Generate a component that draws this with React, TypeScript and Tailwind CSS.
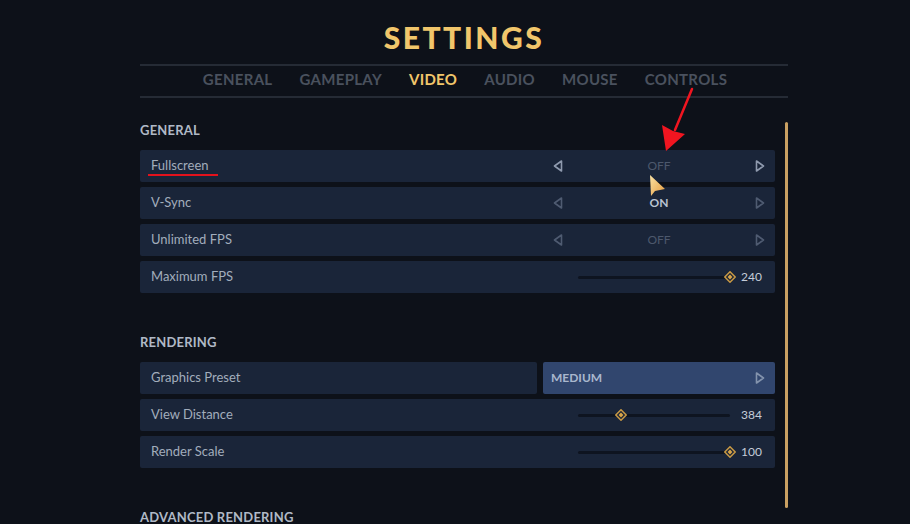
import React from "react";

const FONT = { fontFamily: "Lato, 'Noto Sans', sans-serif" };

function Arrow({ dir, color }: { dir: "left" | "right"; color: string }) {
  return (
    <svg width="10" height="12" viewBox="0 0 10 12">
      {dir === "left" ? (
        <polygon points="8.5,1 1.5,6 8.5,11" fill="none" stroke={color} strokeWidth="1.6" strokeLinejoin="round" />
      ) : (
        <polygon points="1.5,1 8.5,6 1.5,11" fill="none" stroke={color} strokeWidth="1.6" strokeLinejoin="round" />
      )}
    </svg>
  );
}

function Thumb() {
  return (
    <svg width="12" height="12" viewBox="0 0 12 12">
      <polygon points="6,0.8 11.2,6 6,11.2 0.8,6" fill="#1a2335" stroke="#c99a45" strokeWidth="1.5" />
      <polygon points="6,3.6 8.4,6 6,8.4 3.6,6" fill="#d9a649" />
    </svg>
  );
}

function Row({ label, children }: { label: string; children: React.ReactNode }) {
  return (
    <div className="flex h-[32px] items-center justify-between rounded-[2px] bg-[#1a2539]">
      <span className="pl-[11px] text-[13px] text-[#a2adbc]">{label}</span>
      {children}
    </div>
  );
}

function Selector({ value, active, on }: { value: string; active?: boolean; on?: boolean }) {
  const c = active ? "#8f9aae" : "#4f5b71";
  return (
    <div className="flex w-[232px] items-center justify-between px-[10px]">
      <Arrow dir="left" color={c} />
      <span className={on ? "text-[12px] font-bold text-[#b9c3d2]" : "text-[12px] text-[#4d586c]"}>{value}</span>
      <Arrow dir="right" color={c} />
    </div>
  );
}

function Slider({ pct, value }: { pct: number; value: string }) {
  return (
    <div className="flex w-[232px] items-center pl-[35px] pr-[10px]">
      <div className="relative h-[3px] w-[152px] rounded-full bg-[#0e1420]">
        <div className="absolute top-1/2 -translate-x-1/2 -translate-y-1/2" style={{ left: `${pct}%` }}>
          <Thumb />
        </div>
      </div>
      <span className="ml-[11px] w-[24px] text-[12px] text-[#c4ccd8]">{value}</span>
    </div>
  );
}

export default function App() {
  const tabs = ["GENERAL", "GAMEPLAY", "VIDEO", "AUDIO", "MOUSE", "CONTROLS"];
  return (
    <div className="relative h-[524px] w-[910px] overflow-hidden bg-[#0d1119]" style={FONT}>
      <div className="ml-[140px] w-[648px]">
        <div className="pt-[22px] text-center text-[30px] font-black leading-[30px] tracking-[2.5px] text-[#f1c66b]">
          SETTINGS
        </div>
        <div className="mt-[12px] h-[2px] bg-[#252b35]" />
        <div className="flex h-[30px] items-center justify-center gap-[27px] pb-[4px] pl-[2px] text-[15px] font-bold tracking-[0.3px] text-[#4a515e]">
          {tabs.map((t) => (
            <span key={t} className={t === "VIDEO" ? "text-[#f1c66b]" : ""}>
              {t}
            </span>
          ))}
        </div>
        <div className="h-[2px] bg-[#252b35]" />

        <div className="mt-[24px] flex gap-[10px]">
          <div className="w-[635px]">
            <div className="text-[13px] font-bold leading-[16px] tracking-[0.2px] text-[#b0b9c6]">GENERAL</div>
            <div className="mt-[12px] flex flex-col gap-[5px]">
              <Row label="Fullscreen">
                <Selector value="OFF" active />
              </Row>
              <Row label="V-Sync">
                <Selector value="ON" on />
              </Row>
              <Row label="Unlimited FPS">
                <Selector value="OFF" />
              </Row>
              <Row label="Maximum FPS">
                <Slider pct={100} value="240" />
              </Row>
            </div>

            <div className="mt-[41px] text-[13px] font-bold leading-[16px] tracking-[0.2px] text-[#b0b9c6]">RENDERING</div>
            <div className="mt-[12px] flex flex-col gap-[5px]">
              <div className="flex h-[32px] gap-[6px]">
                <div className="flex flex-1 items-center rounded-[2px] bg-[#1a2539] pl-[11px] text-[13px] text-[#a2adbc]">
                  Graphics Preset
                </div>
                <div className="flex w-[232px] items-center justify-between rounded-[2px] bg-[#31466e] pl-[8px] pr-[10px]">
                  <span className="text-[12px] font-bold text-[#a9b7cd]">MEDIUM</span>
                  <Arrow dir="right" color="#8393ad" />
                </div>
              </div>
              <Row label="View Distance">
                <Slider pct={28} value="384" />
              </Row>
              <Row label="Render Scale">
                <Slider pct={100} value="100" />
              </Row>
            </div>

            <div className="mt-[41px] text-[13px] font-bold leading-[16px] tracking-[0.2px] text-[#b0b9c6]">
              ADVANCED RENDERING
            </div>
          </div>
          <div className="h-[386px] w-[3px] rounded-full bg-[#c9a062]" />
        </div>
      </div>

      {/* red underline annotation */}
      <div className="absolute left-[148px] top-[174px] h-[2px] w-[70px] bg-[#e3121c]" />

      {/* red arrow annotation */}
      <svg className="absolute left-0 top-0" width="910" height="524" viewBox="0 0 910 524" style={{ pointerEvents: "none" }}>
        <line x1="692" y1="89" x2="675" y2="130" stroke="#f01520" strokeWidth="2.5" strokeLinecap="round" />
        <path d="M666 151 L662 125 L673 131 L685 134 Z" fill="#f01520" />
      </svg>

      {/* mouse cursor */}
      <svg className="absolute left-[649px] top-[174px]" width="18" height="24" viewBox="0 0 18 24">
        <defs>
          <linearGradient id="cg" x1="0" y1="0" x2="1" y2="1">
            <stop offset="0" stopColor="#fbe3a6" />
            <stop offset="1" stopColor="#e49a3c" />
          </linearGradient>
        </defs>
        <path d="M1 1 L2 22 L6 17 L16 15 Z" fill="url(#cg)" />
      </svg>
    </div>
  );
}
